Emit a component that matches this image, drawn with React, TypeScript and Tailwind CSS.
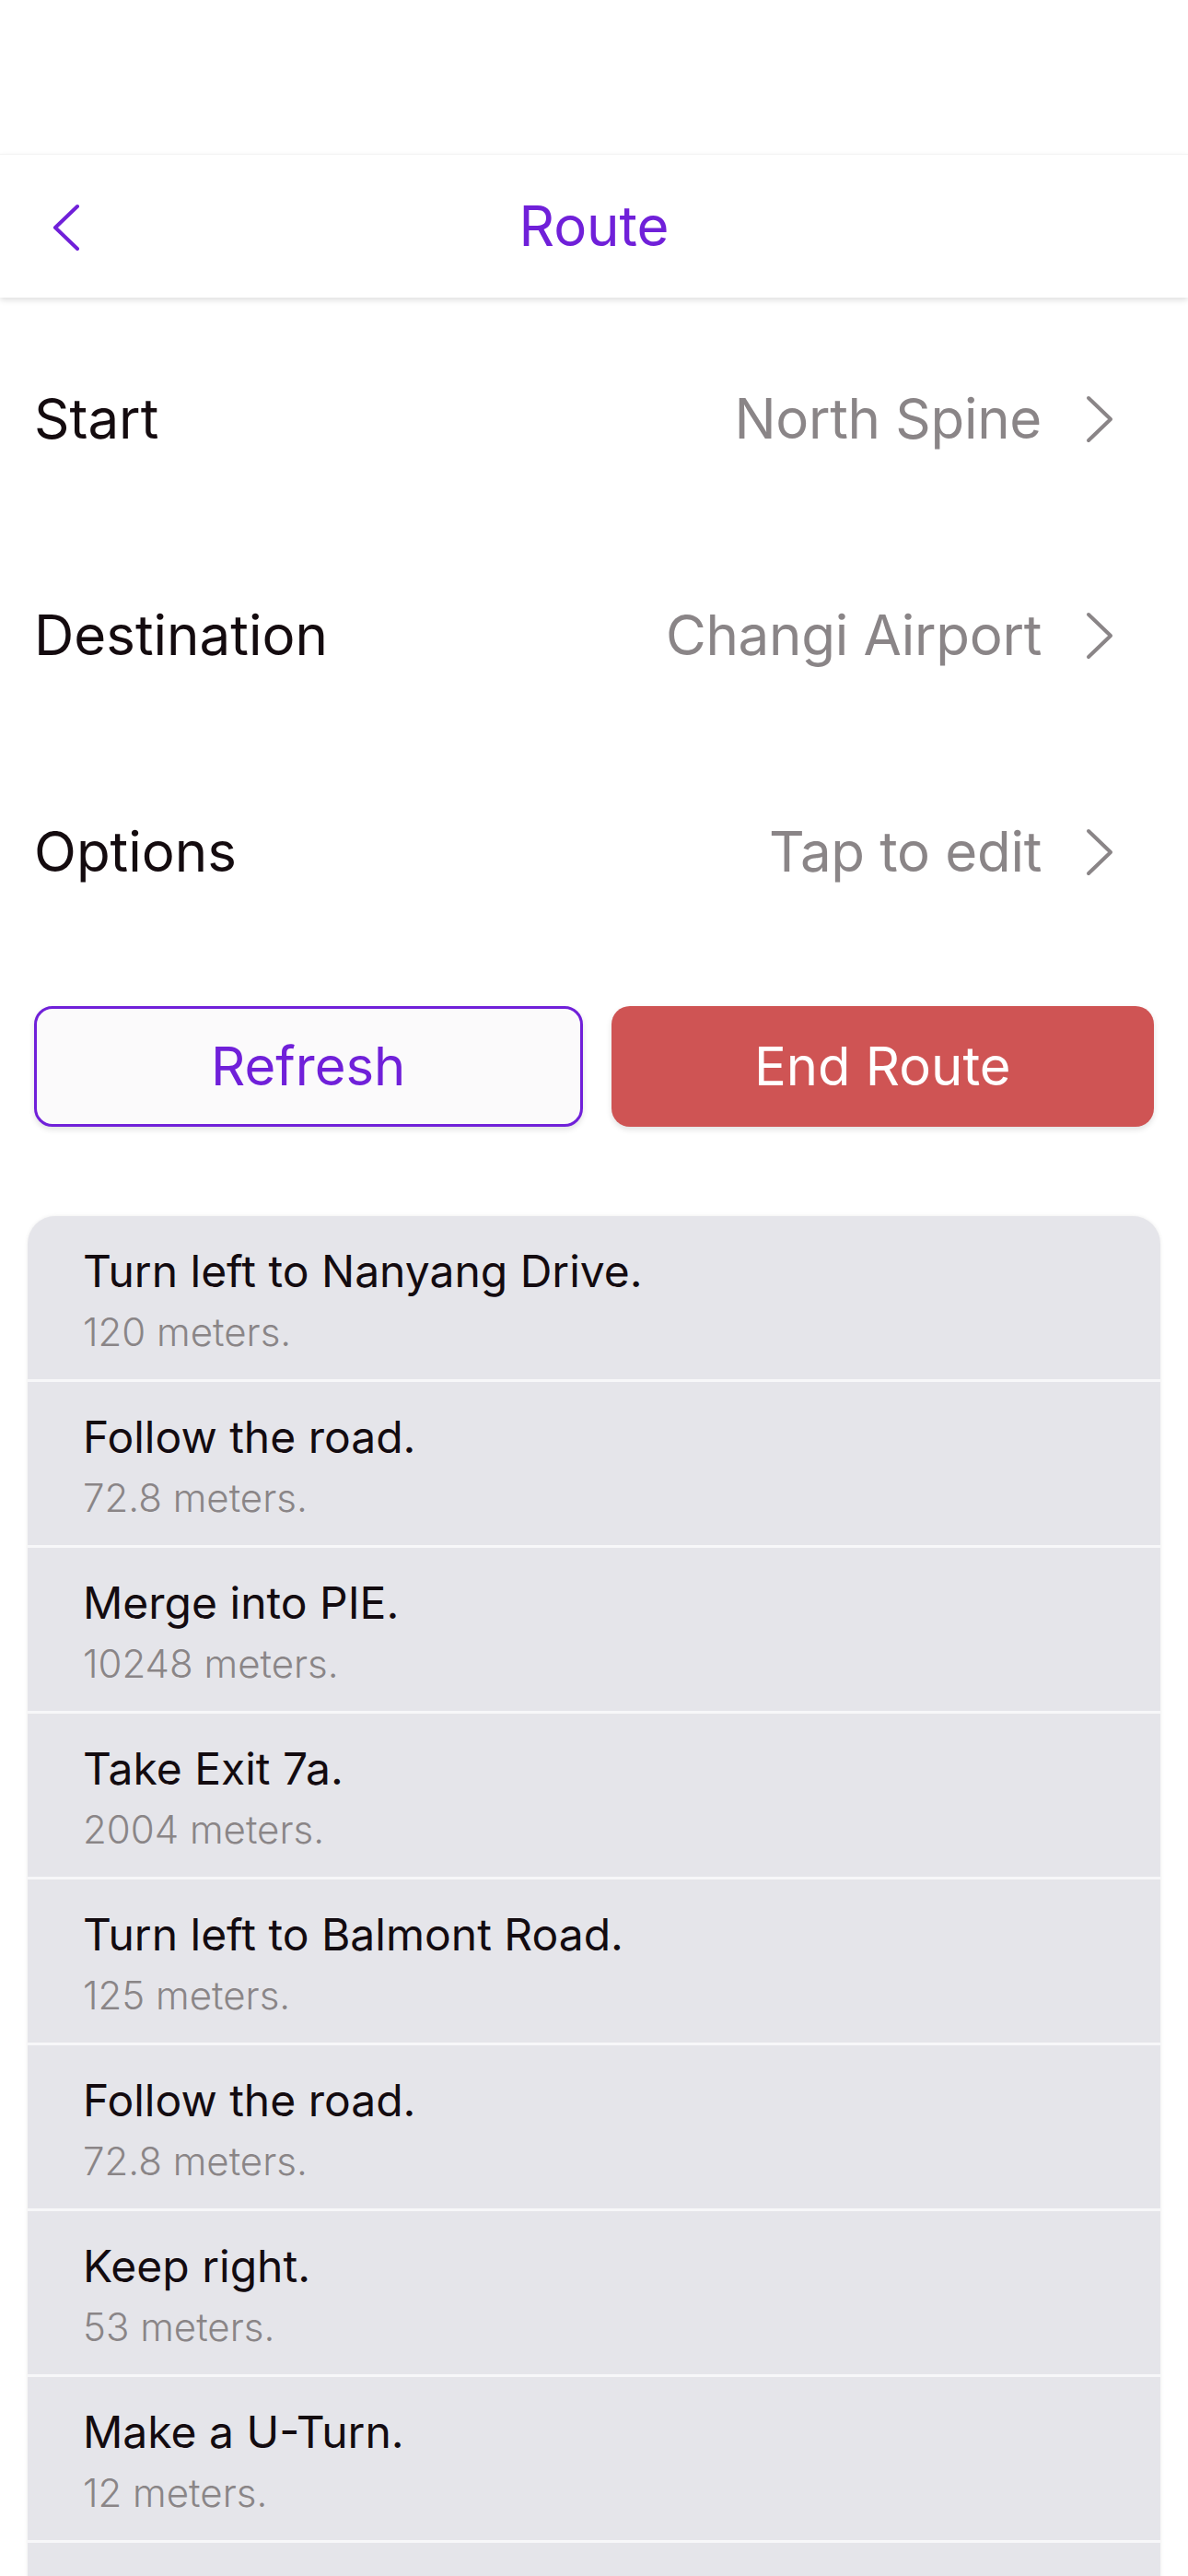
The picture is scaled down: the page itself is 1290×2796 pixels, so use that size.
import React from "react";

const steps = [
  { t: "Turn left to Nanyang Drive.", d: "120 meters." },
  { t: "Follow the road.", d: "72.8 meters." },
  { t: "Merge into PIE.", d: "10248 meters." },
  { t: "Take Exit 7a.", d: "2004 meters." },
  { t: "Turn left to Balmont Road.", d: "125 meters." },
  { t: "Follow the road.", d: "72.8 meters." },
  { t: "Keep right.", d: "53 meters." },
  { t: "Make a U-Turn.", d: "12 meters." },
];

function Chevron() {
  return (
    <svg width="30" height="52" viewBox="-2 -2 30 52" fill="none">
      <path d="M1 1 L25 24 L1 47" stroke="#8a8587" strokeWidth="4" strokeLinecap="round" strokeLinejoin="round" />
    </svg>
  );
}

function Row({ label, value }: { label: string; value: string }) {
  return (
    <div className="flex h-[235px] items-center justify-between pl-[37px] pr-[81px]">
      <span className="text-[60px] leading-[73px] text-[#140b0f]">{label}</span>
      <div className="flex items-center gap-[48px]">
        <span className="text-[60px] leading-[73px] tracking-[-0.3px] text-[#8a8587]">{value}</span>
        <Chevron />
      </div>
    </div>
  );
}

export default function App() {
  return (
    <div className="min-h-[2796px] w-[1290px] bg-white" style={{ fontFamily: "Inter, 'Noto Sans', sans-serif" }}>
      <div className="h-[167px] bg-white" />
      <div className="relative z-10 flex h-[156px] items-center justify-center border-t border-[#f4f4f4] bg-white shadow-[0_3px_6px_rgba(0,0,0,0.12)]">
        <div className="absolute left-[57px] top-[53px]">
          <svg width="30" height="52" viewBox="-2 -2 30 52" fill="none">
            <path d="M25 1 L1 24 L25 47" stroke="#7020d9" strokeWidth="4" strokeLinecap="round" strokeLinejoin="round" />
          </svg>
        </div>
        <span className="text-[60px] leading-[73px] text-[#7020d9]">Route</span>
      </div>

      <div className="mt-[14px]">
        <Row label="Start" value="North Spine" />
        <Row label="Destination" value="Changi Airport" />
        <Row label="Options" value="Tap to edit" />
      </div>

      <div className="mt-[50px] flex gap-[31px] px-[37px]">
        <button className="flex h-[131px] flex-1 items-center justify-center rounded-[20px] border-[3px] border-[#7020d9] bg-[#fbfafb] text-[58px] text-[#7020d9] shadow-[0_3px_6px_rgba(0,0,0,0.12)]">
          Refresh
        </button>
        <button className="flex h-[131px] flex-1 items-center justify-center rounded-[20px] bg-[#cf5454] text-[58px] text-white shadow-[0_3px_6px_rgba(0,0,0,0.12)]">
          End Route
        </button>
      </div>

      <div className="mx-[30px] mt-[97px] overflow-hidden rounded-[30px] bg-[#e5e5ea] shadow-[0_0_4px_rgba(0,0,0,0.08)]">
        {steps.map((s, i) => (
          <div key={i} className="border-b-[3px] border-[#f7f7f9] pb-[26px] pl-[60px] pt-[31px]">
            <div className="text-[48px] leading-[58px] text-[#130b10]">{s.t}</div>
            <div className="mt-[11px] text-[42px] font-light leading-[51px] text-[#8a8587]">{s.d}</div>
          </div>
        ))}
        <div className="h-[177px]" />
      </div>
    </div>
  );
}
